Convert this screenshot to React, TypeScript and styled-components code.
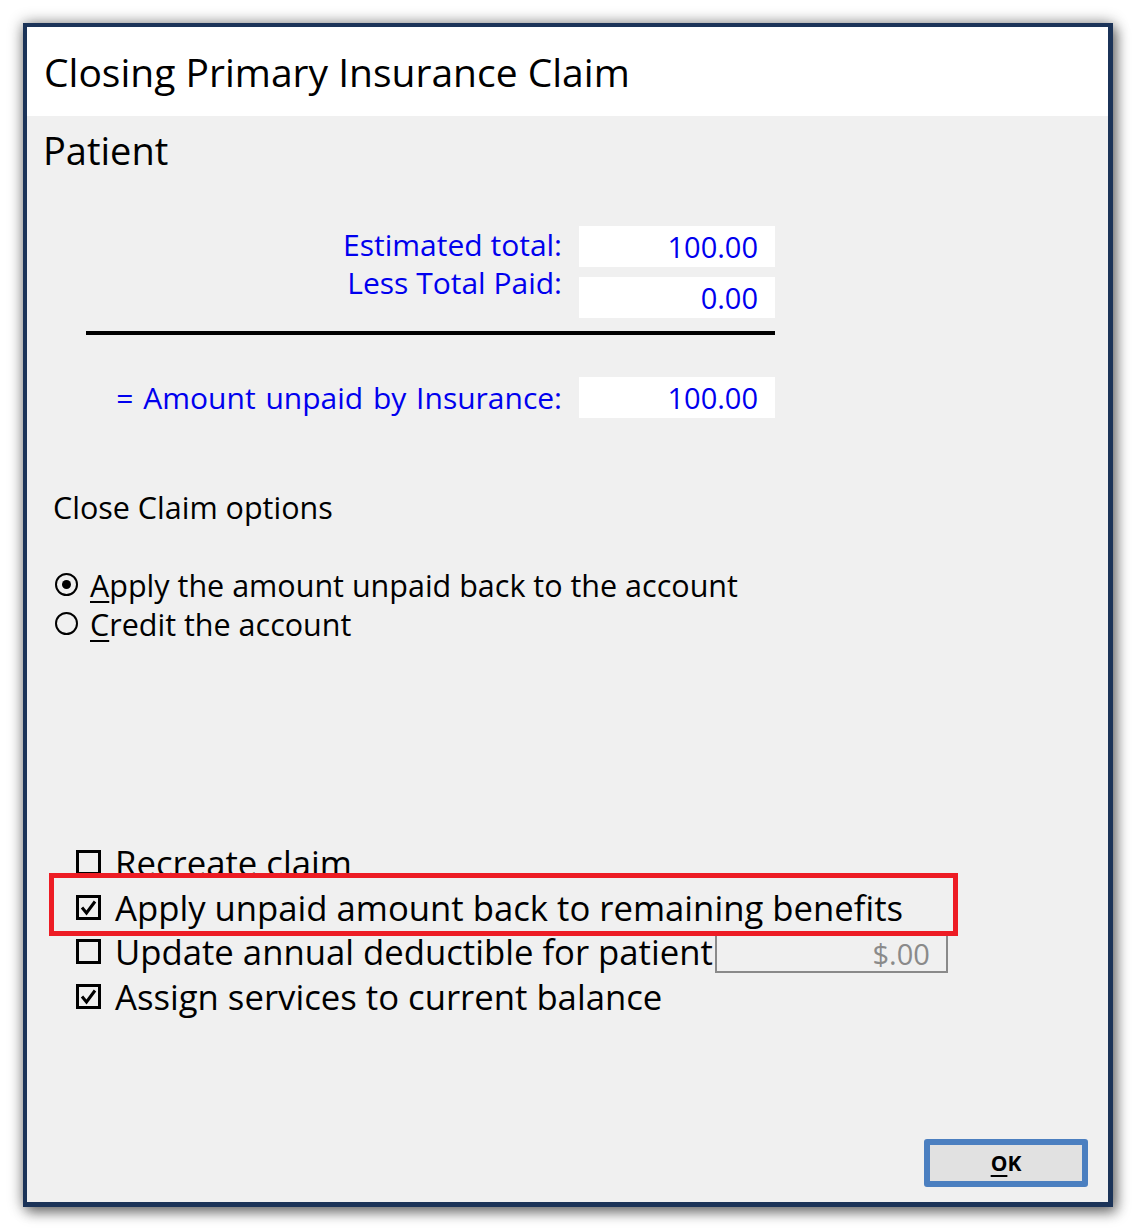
import React from "react";
import styled, { createGlobalStyle } from "styled-components";

const Global = createGlobalStyle`
  html, body { margin: 0; padding: 0; background: #ffffff; }
  body { font-family: "Open Sans", "Noto Sans", sans-serif; }
`;

const Page = styled.div`
  width: 1136px;
  height: 1231px;
  box-sizing: border-box;
  padding: 23px 23px 24px 23px;
  background: #ffffff;
`;

const Window = styled.div`
  height: 100%;
  box-sizing: border-box;
  display: flex;
  flex-direction: column;
  border: 4px solid #1b3358;
  border-right-width: 5px;
  border-bottom-width: 5px;
  box-shadow: 0 0 14px rgba(0, 0, 0, 0.45), 4px 6px 12px rgba(0, 0, 0, 0.4);
`;

const TitleBar = styled.div`
  height: 89px;
  flex: none;
  background: #ffffff;
  display: flex;
  align-items: center;
  padding-left: 17px;
  font-size: 39px;
  color: #000;
`;

const Body = styled.div`
  flex: 1;
  background: #f0f0f0;
  display: flex;
  flex-direction: column;
  position: relative;
`;

const Heading = styled.div`
  height: 68px;
  line-height: 68px;
  padding-left: 16px;
  font-size: 38px;
  color: #000;
`;

const Totals = styled.div`
  margin: 42px 0 0 59px;
  width: 689px;
  display: grid;
  grid-template-columns: 1fr 196px;
  column-gap: 17px;
`;

const LabelStack = styled.div`
  display: flex;
  flex-direction: column;
  align-items: flex-end;
`;

const BlueLabel = styled.div`
  line-height: 38px;
  font-size: 30px;
  color: #0000ee;
  white-space: nowrap;
`;

const FieldStack = styled.div`
  display: flex;
  flex-direction: column;
  gap: 10px;
`;

const ValueBox = styled.div`
  height: 41px;
  background: #ffffff;
  display: flex;
  align-items: center;
  justify-content: flex-end;
  padding-right: 17px;
  font-size: 29px;
  color: #0000ee;
`;

const Rule = styled.div`
  grid-column: 1 / 3;
  height: 4px;
  background: #000;
  margin: 13px 0 42px;
`;

const CenterLabel = styled(BlueLabel)`
  align-self: center;
  justify-self: end;
  word-spacing: 2px;
`;

const SectionTitle = styled.div`
  margin: 69px 0 0 26px;
  line-height: 40px;
  font-size: 30.5px;
  color: #000;
`;

const RadioList = styled.div`
  margin: 38px 0 0 28px;
  display: flex;
  flex-direction: column;
`;

const RadioRow = styled.div`
  display: flex;
  align-items: center;
  height: 39px;
  gap: 12px;
  font-size: 30.5px;
  color: #000;
`;

const RadioCircle = styled.span<{ $on?: boolean }>`
  width: 19px;
  height: 19px;
  border: 2px solid #000;
  border-radius: 50%;
  display: inline-flex;
  align-items: center;
  justify-content: center;
  flex: none;
  &::after {
    content: "";
    display: ${(p) => (p.$on ? "block" : "none")};
    width: 9px;
    height: 9px;
    border-radius: 50%;
    background: #000;
  }
`;

const U = styled.span`
  text-decoration: underline;
  text-underline-offset: 4px;
  text-decoration-thickness: 2px;
`;

const CheckList = styled.div`
  margin: 197px 0 0 49px;
  position: relative;
  display: flex;
  flex-direction: column;
  width: 880px;
`;

const CheckRow = styled.div`
  display: flex;
  align-items: center;
  height: 44.7px;
  gap: 14px;
  font-size: 34.7px;
  color: #000;
  white-space: nowrap;
`;

const Box = styled.span`
  width: 25px;
  height: 25px;
  flex: none;
  display: inline-flex;
  svg { display: block; }
`;

const Highlight = styled.div`
  position: absolute;
  left: -27px;
  top: 33px;
  width: 909px;
  height: 63px;
  box-sizing: border-box;
  border: 5px solid #ed1c24;
  pointer-events: none;
`;

const SmallField = styled.div`
  width: 233px;
  height: 39px;
  flex: none;
  box-sizing: border-box;
  border: 2px solid #8a8a8a;
  margin: 3px 0 0 -12px;
  display: flex;
  align-items: center;
  justify-content: flex-end;
  padding-right: 16px;
  font-size: 29px;
  color: #8a8a8a;
`;

const Footer = styled.div`
  margin-top: auto;
  display: flex;
  justify-content: flex-end;
  padding: 0 20px 15px 0;
`;

const OkButton = styled.button`
  width: 164px;
  height: 48px;
  box-sizing: border-box;
  border: 6px solid #4b7fc0;
  border-radius: 3px;
  background: #e1e1e1;
  font-family: "Open Sans", sans-serif;
  font-weight: 700;
  font-size: 21px;
  color: #000;
  padding: 0;
  display: flex;
  align-items: center;
  justify-content: center;
`;

const CheckBox: React.FC<{ on?: boolean }> = ({ on }) => (
  <Box>
    <svg width="25" height="25" viewBox="0 0 25 25">
      <rect x="1.5" y="1.5" width="22" height="22" fill="none" stroke="#000" strokeWidth="3" />
      {on && <path d="M6 12.5 L10.5 18 L19 6.5" fill="none" stroke="#000" strokeWidth="3" />}
    </svg>
  </Box>
);

export default function App() {
  return (
    <>
      <Global />
      <Page>
        <Window>
          <TitleBar>Closing Primary Insurance Claim</TitleBar>
          <Body>
            <Heading>Patient</Heading>
            <Totals>
              <LabelStack>
                <BlueLabel>Estimated total:</BlueLabel>
                <BlueLabel>Less Total Paid:</BlueLabel>
              </LabelStack>
              <FieldStack>
                <ValueBox>100.00</ValueBox>
                <ValueBox>0.00</ValueBox>
              </FieldStack>
              <Rule />
              <CenterLabel>= Amount unpaid by Insurance:</CenterLabel>
              <ValueBox>100.00</ValueBox>
            </Totals>
            <SectionTitle>Close Claim options</SectionTitle>
            <RadioList>
              <RadioRow>
                <RadioCircle $on />
                <span>
                  <U>A</U>pply the amount unpaid back to the account
                </span>
              </RadioRow>
              <RadioRow>
                <RadioCircle />
                <span>
                  <U>C</U>redit the account
                </span>
              </RadioRow>
            </RadioList>
            <CheckList>
              <CheckRow>
                <CheckBox />
                Recreate claim
              </CheckRow>
              <CheckRow>
                <CheckBox on />
                Apply unpaid amount back to remaining benefits
              </CheckRow>
              <CheckRow>
                <CheckBox />
                Update annual deductible for patient
                <SmallField>$.00</SmallField>
              </CheckRow>
              <CheckRow>
                <CheckBox on />
                Assign services to current balance
              </CheckRow>
              <Highlight />
            </CheckList>
            <Footer>
              <OkButton>
                <U>O</U>K
              </OkButton>
            </Footer>
          </Body>
        </Window>
      </Page>
    </>
  );
}
